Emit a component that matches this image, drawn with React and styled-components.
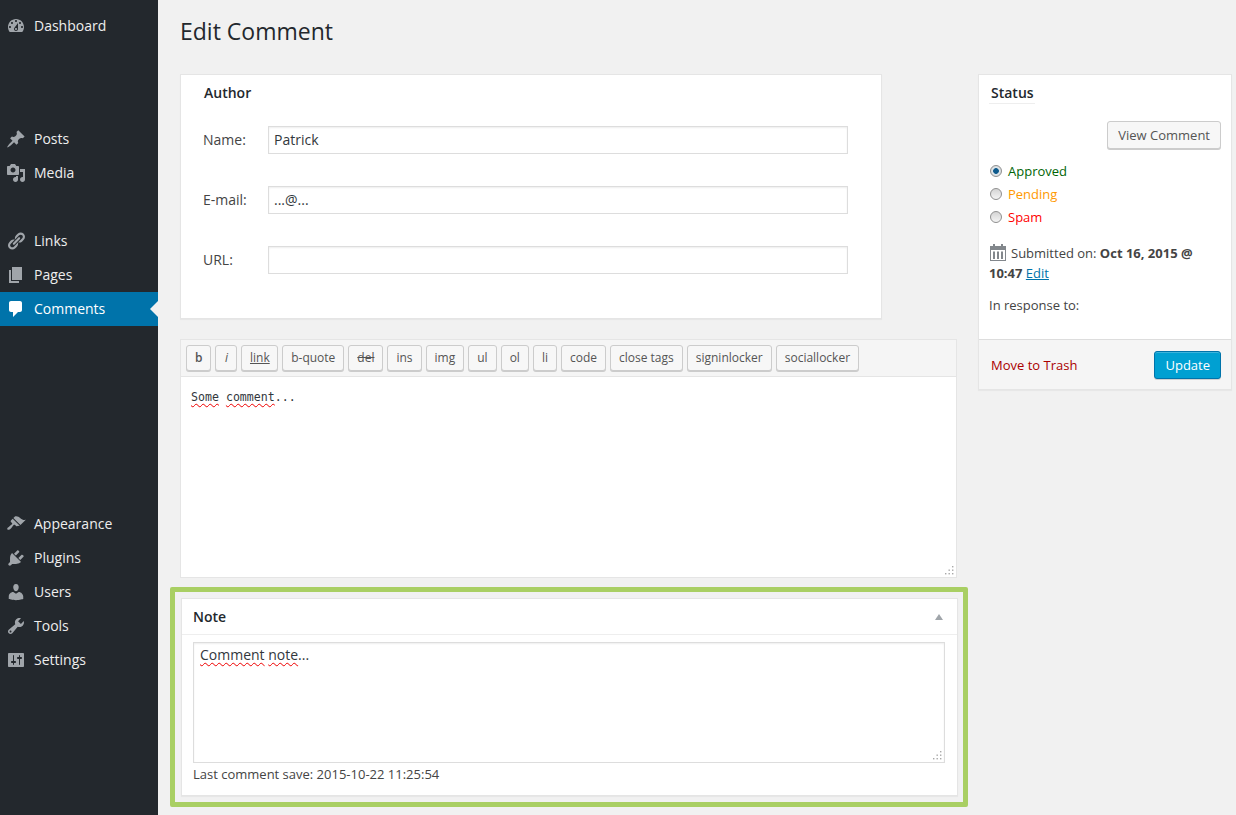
import React from 'react';
import styled, { createGlobalStyle } from 'styled-components';

const GlobalStyle = createGlobalStyle`
  html, body { margin: 0; padding: 0; background: #f1f1f1; }
  body { font-family: "Open Sans", "Liberation Sans", sans-serif; font-size: 13px; color: #444; }
  * { box-sizing: border-box; }
`;

const ICONS = {
  dashboard: 'M3.76 16h12.48c1.1-1.37 1.76-3.11 1.76-5 0-4.42-3.58-8-8-8s-8 3.58-8 8c0 1.89.66 3.63 1.76 5zM10 4c.55 0 1 .45 1 1s-.45 1-1 1-1-.45-1-1 .45-1 1-1zM6 6c.55 0 1 .45 1 1s-.45 1-1 1-1-.45-1-1 .45-1 1-1zm8 0c.55 0 1 .45 1 1s-.45 1-1 1-1-.45-1-1 .45-1 1-1zm-5.37 5.55L12 7v6c0 1.1-.9 2-2 2s-2-.9-2-2c0-.57.24-1.08.63-1.45zM4 10c.55 0 1 .45 1 1s-.45 1-1 1-1-.45-1-1 .45-1 1-1zm12 0c.55 0 1 .45 1 1s-.45 1-1 1-1-.45-1-1 .45-1 1-1zm-5 3c0-.55-.45-1-1-1s-1 .45-1 1 .45 1 1 1 1-.45 1-1z',
  posts: 'M10.44 3.02l1.82-1.82 6.36 6.35-1.83 1.82c-1.05-.68-2.48-.57-3.41.36l-.75.75c-.92.93-1.04 2.35-.35 3.41l-1.83 1.82-2.41-2.41-2.8 2.79c-.42.42-3.38 2.71-3.8 2.29s1.86-3.39 2.28-3.81l2.79-2.79L4.1 9.36l1.83-1.82c1.05.69 2.48.57 3.4-.36l.75-.75c.93-.92 1.05-2.35.36-3.41z',
  media: 'M13 11V4c0-.55-.45-1-1-1h-1.67L9 1H5L3.67 3H2c-.55 0-1 .45-1 1v7c0 .55.45 1 1 1h10c.55 0 1-.45 1-1zM7 4.5c1.38 0 2.5 1.12 2.5 2.5S8.38 9.5 7 9.5 4.5 8.38 4.5 7 5.62 4.5 7 4.5zM14 6h5v10.5c0 1.38-1.12 2.5-2.5 2.5S14 17.88 14 16.5s1.12-2.5 2.5-2.5c.17 0 .34.02.5.05V9h-3V6zm-4 8.05V13h2v3.5c0 1.38-1.12 2.5-2.5 2.5S7 17.88 7 16.5 8.12 14 9.5 14c.17 0 .34.02.5.05z',
  links: 'M17.74 2.76c1.68 1.69 1.68 4.41 0 6.1l-1.53 1.52c-1.12 1.12-2.7 1.47-4.14 1.09l2.62-2.61.76-.77.76-.76c.84-.84.84-2.2 0-3.04-.84-.85-2.2-.85-3.04 0l-.77.76-3.38 3.38c-.37-1.44-.02-3.02 1.1-4.14l1.52-1.53c1.69-1.68 4.42-1.68 6.1 0zM8.59 13.43l5.34-5.34c.42-.42.42-1.1 0-1.52-.44-.43-1.13-.39-1.53 0l-5.33 5.34c-.42.42-.42 1.1 0 1.52.44.43 1.13.39 1.52 0zm-.76 2.29l4.14-4.15c.38 1.44.03 3.02-1.09 4.14l-1.52 1.53c-1.69 1.68-4.41 1.68-6.1 0-1.68-1.68-1.68-4.42 0-6.1l1.53-1.52c1.12-1.12 2.7-1.47 4.14-1.1l-4.14 4.15c-.85.84-.85 2.2 0 3.05.84.84 2.2.84 3.04 0z',
  pages: 'M6 15V2h10v13H6zm-1 1h8v2H3V5h2v11z',
  comments: 'M5 2h9c1.1 0 2 .9 2 2v7c0 1.1-.9 2-2 2h-2l-5 5v-5H5c-1.1 0-2-.9-2-2V4c0-1.1.9-2 2-2z',
  appearance: 'M14.48 11.06L7.41 3.99l1.5-1.5c.5-.56 2.3-.47 3.51.32 1.21.8 1.43 1.28 2.91 2.1 1.18.64 2.45 1.26 4.45.85zm-.71.71L6.7 4.7 4.93 6.47c-.39.39-.39 1.02 0 1.41l1.06 1.06c.39.39.39 1.03 0 1.42-.6.6-1.43 1.11-2.21 1.69-.35.26-.7.53-1.01.84C1.43 13.23.76 14.75 1.5 15.5c.75.75 2.27.08 3.61-1.27.31-.31.58-.66.85-1.01.57-.78 1.08-1.61 1.69-2.21.39-.39 1.02-.39 1.41 0l1.06 1.06c.39.39 1.02.39 1.41 0z',
  plugins: 'M13.11 4.36L9.87 7.6 8 5.73l3.24-3.24c.35-.34 1.05-.2 1.56.32.52.51.66 1.21.31 1.55zm-8 1.77l.91-1.12 9.01 9.01-1.19.84c-.71.71-2.63 1.16-3.82 1.16H6.14L4.9 17.26c-.59.59-1.54.59-2.12 0-.59-.58-.59-1.53 0-2.12l1.24-1.24v-3.88c0-1.13.4-3.19 1.09-3.89zm7.26 3.97l3.24-3.24c.34-.35 1.04-.21 1.55.31.52.51.66 1.21.31 1.55l-3.24 3.25z',
  users: 'M10 9.25c-2.27 0-2.73-3.44-2.73-3.44C7 4.02 7.82 2 9.97 2c2.16 0 2.98 2.02 2.71 3.81 0 0-.41 3.44-2.68 3.44zm0 2.57L12.72 10c2.39 0 4.52 2.33 4.52 4.53v2.49s-3.65 1.13-7.24 1.13c-3.65 0-7.24-1.13-7.24-1.13v-2.49c0-2.25 1.94-4.48 4.47-4.48z',
  tools: 'M16.68 9.77c-1.34 1.34-3.3 1.67-4.95.99l-5.41 6.52c-.99.99-2.59.99-3.58 0s-.99-2.59 0-3.57l6.52-5.42c-.68-1.65-.35-3.61.99-4.95 1.28-1.28 3.12-1.62 4.72-1.06l-2.89 2.89 2.82 2.82 2.86-2.87c.53 1.58.18 3.39-1.08 4.65zM3.81 16.21c.4.39 1.04.39 1.43 0 .4-.4.4-1.04 0-1.43-.39-.4-1.03-.4-1.43 0-.39.39-.39 1.03 0 1.43z',
  settings: 'M18 16V4c0-.55-.45-1-1-1H3c-.55 0-1 .45-1 1v12c0 .55.45 1 1 1h14c.55 0 1-.45 1-1zM8 11h1c.55 0 1 .45 1 1s-.45 1-1 1H8v1.5c0 .28-.22.5-.5.5s-.5-.22-.5-.5V13H6c-.55 0-1-.45-1-1s.45-1 1-1h1V5.5c0-.28.22-.5.5-.5s.5.22.5.5V11zm5-2h-1c-.55 0-1-.45-1-1s.45-1 1-1h1V5.5c0-.28.22-.5.5-.5s.5.22.5.5V7h1c.55 0 1 .45 1 1s-.45 1-1 1h-1v5.5c0 .28-.22.5-.5.5s-.5-.22-.5-.5V9z',
};

const MENU = [
  { id: 'dashboard', label: 'Dashboard', gap: 9 },
  { id: 'posts', label: 'Posts', gap: 79 },
  { id: 'media', label: 'Media' },
  { id: 'links', label: 'Links', gap: 34 },
  { id: 'pages', label: 'Pages' },
  { id: 'comments', label: 'Comments', active: true },
  { id: 'appearance', label: 'Appearance', gap: 181 },
  { id: 'plugins', label: 'Plugins' },
  { id: 'users', label: 'Users' },
  { id: 'tools', label: 'Tools' },
  { id: 'settings', label: 'Settings' },
];

const QUICKTAGS = ['b', 'i', 'link', 'b-quote', 'del', 'ins', 'img', 'ul', 'ol', 'li', 'code', 'close tags', 'signinlocker', 'sociallocker'];

const Page = styled.div`
  display: flex;
  height: 815px;
  overflow: hidden;
`;

const Sidebar = styled.nav`
  width: 158px;
  flex: none;
  background: #23282d;
`;

const MenuItem = styled.a`
  position: relative;
  display: flex;
  align-items: center;
  gap: 8px;
  height: 34px;
  padding-left: 6px;
  margin-top: ${p => p.$gap || 0}px;
  font-size: 14px;
  color: ${p => (p.$active ? '#fff' : '#eee')};
  background: ${p => (p.$active ? '#0073aa' : 'transparent')};
  svg { width: 20px; height: 20px; fill: ${p => (p.$active ? '#fff' : '#a0a5aa')}; flex: none; }
`;

const MenuLabel = styled.span`
  padding-bottom: 2px;
`;

const ActiveArrow = styled.span`
  position: absolute;
  right: 0;
  top: 9px;
  border: 8px solid transparent;
  border-right-color: #f1f1f1;
  border-left-width: 0;
`;

const Main = styled.main`
  padding: 0 0 0 22px;
`;

const Title = styled.h1`
  margin: 0;
  height: 74px;
  padding-top: 15px;
  font-size: 23px;
  line-height: 32px;
  font-weight: 400;
  color: #23282d;
`;

const Columns = styled.div`
  display: flex;
  gap: 21px;
  align-items: flex-start;
`;

const LeftColumn = styled.div`
  width: 777px;
`;

const Card = styled.section`
  background: #fff;
  border: 1px solid #e5e5e5;
  box-shadow: 0 1px 1px rgba(0, 0, 0, 0.04);
`;

const AuthorCard = styled(Card)`
  width: 702px;
  height: 245px;
  padding: 8px 22px;
`;

const CardTitle = styled.h3`
  margin: 0;
  font-size: 14px;
  line-height: 20px;
  font-weight: 600;
  color: #23282d;
`;

const AuthorTitle = styled(CardTitle)`
  padding-left: 1px;
`;

const AuthorForm = styled.div`
  display: grid;
  grid-template-columns: 65px 580px;
  grid-auto-rows: 28px;
  row-gap: 32px;
  align-items: center;
  margin-top: 23px;
`;

const FieldLabel = styled.label`
  padding-bottom: 2px;
  font-size: 14px;
  color: #444;
`;

const TextInput = styled.input`
  width: 100%;
  height: 28px;
  padding: 0 5px 2px;
  border: 1px solid #ddd;
  background: #fff;
  box-shadow: inset 0 1px 2px rgba(0, 0, 0, 0.07);
  font: 14px "Open Sans", sans-serif;
  color: #32373c;
  outline: none;
`;

const Editor = styled(Card)`
  margin-top: 20px;
  height: 239px;
  position: relative;
  display: flex;
  flex-direction: column;
  box-shadow: none;
`;

const Toolbar = styled.div`
  display: flex;
  gap: 4px;
  height: 37px;
  padding: 5px;
  background: #f5f5f5;
  border-bottom: 1px solid #e5e5e5;
`;

const TagButton = styled.button`
  height: 26px;
  min-width: 22px;
  padding: 0 ${p => p.$pad || 8}px;
  border: 1px solid #ccc;
  border-radius: 3px;
  background: #f7f7f7;
  box-shadow: 0 1px 0 #ccc;
  font: ${p => (p.$italic ? 'italic ' : '')}${p => (p.$bold ? '600 ' : '')}12px/24px "Open Sans", sans-serif;
  color: #555;
  text-decoration: ${p => p.$deco || 'none'};
`;

const EditorText = styled.div`
  flex: 1;
  padding: 12px 10px;
  font: 11.6px/16px "DejaVu Sans Mono", monospace;
  color: #32373c;
`;

const Misspelled = styled.span`
  text-decoration: underline wavy #e00;
  text-decoration-thickness: 1px;
  text-underline-offset: 2px;
`;

const GripIcon = styled.svg`
  position: absolute;
  right: 2px;
  bottom: 2px;
  width: 9px;
  height: 9px;
  fill: #a8a8a8;
`;

const NoteFrame = styled.div`
  width: 798px;
  margin: 9px 0 0 -10px;
  padding: 6px 5px 6px 6px;
  border: 5px solid #a9cf63;
  border-radius: 2px;
`;

const NoteCard = styled(Card)`
  height: 198px;
`;

const NoteHead = styled.div`
  display: flex;
  align-items: center;
  justify-content: space-between;
  height: 36px;
  padding: 0 14px 0 11px;
  border-bottom: 1px solid #eee;
`;

const SortArrow = styled.span`
  border: 4px solid transparent;
  border-top-width: 0;
  border-bottom: 6px solid #a0a5aa;
`;

const NoteBody = styled.div`
  padding: 7px 12px 7px 11px;
`;

const NoteArea = styled.div`
  position: relative;
  height: 121px;
  padding: 2px 6px;
  border: 1px solid #ddd;
  box-shadow: inset 0 1px 2px rgba(0, 0, 0, 0.07);
  font-size: 14px;
  line-height: 20px;
  color: #32373c;
`;

const SavedLine = styled.p`
  margin: 1px 0 0;
  font-size: 13px;
  line-height: 20px;
  color: #444;
`;

const StatusCard = styled(Card)`
  width: 254px;
  height: 316px;
  display: flex;
  flex-direction: column;
`;

const StatusBody = styled.div`
  flex: 1;
  padding: 8px 10px 0;
`;

const StatusTitle = styled(CardTitle)`
  display: inline-block;
  padding: 0 1px 0 2px;
  height: 21px;
  border-bottom: 1px solid #eee;
`;

const ViewRow = styled.div`
  display: flex;
  justify-content: flex-end;
  margin-top: 17px;
`;

const SecondaryButton = styled.a`
  display: block;
  height: 28px;
  padding: 0 10px;
  border: 1px solid #ccc;
  border-radius: 3px;
  background: #f7f7f7;
  box-shadow: 0 1px 0 #ccc;
  font-size: 13px;
  line-height: 26px;
  color: #555;
`;

const RadioList = styled.div`
  display: grid;
  grid-auto-rows: 23px;
  margin-top: 10px;
  padding-left: 1px;
`;

const RadioRow = styled.label`
  display: flex;
  align-items: center;
  gap: 6px;
  color: ${p => p.$color};
  font-size: 13px;
`;

const RadioDot = styled.input.attrs({ type: 'radio' })`
  appearance: none;
  width: 12px;
  height: 12px;
  margin: 0;
  border: 1px solid #8f8f8f;
  border-radius: 50%;
  background: ${p => (p.$on
    ? 'radial-gradient(circle, #0e5a8c 0 2.5px, #dfe6ea 3.2px, #cfd2d4 100%)'
    : 'linear-gradient(#d4d4d4, #f4f4f4)')};
`;

const Submitted = styled.p`
  margin: 15px 0 0;
  font-size: 13px;
  line-height: 20px;
  color: #444;
  svg { width: 16px; height: 18px; vertical-align: -3px; margin: 0 5px 0 1px; }
  a { color: #0073aa; text-decoration: underline; }
`;

const ResponseLine = styled.p`
  margin: 12px 0 0;
  font-size: 13px;
  line-height: 20px;
`;

const StatusFooter = styled.div`
  display: flex;
  align-items: center;
  justify-content: space-between;
  height: 50px;
  padding: 0 10px 0 12px;
  background: #f5f5f5;
  border-top: 1px solid #ddd;
`;

const TrashLink = styled.a`
  color: #a00;
  font-size: 13px;
`;

const PrimaryButton = styled.a`
  display: block;
  height: 28px;
  padding: 0 10px;
  border: 1px solid #0073aa;
  border-radius: 3px;
  background: #00a0d2;
  box-shadow: inset 0 1px 0 rgba(120, 200, 230, 0.5), 0 1px 0 rgba(0, 0, 0, 0.15);
  font-size: 13px;
  line-height: 26px;
  color: #fff;
`;

const Grip = () => (
  <GripIcon viewBox="0 0 9 9">
    <rect x="7" y="0" width="1.4" height="1.4" />
    <rect x="3.5" y="3.5" width="1.4" height="1.4" />
    <rect x="7" y="3.5" width="1.4" height="1.4" />
    <rect x="0" y="7" width="1.4" height="1.4" />
    <rect x="3.5" y="7" width="1.4" height="1.4" />
    <rect x="7" y="7" width="1.4" height="1.4" />
  </GripIcon>
);

const CalendarIcon = () => (
  <svg viewBox="0 0 16 18">
    <path fill="#82878c" d="M0 3h3V1h2v2h6V1h2v2h3v15H0zm1 4v10h14V7z" />
    <path fill="#82878c" d="M3 8.5h2V16H3zM7 8.5h2V16H7zM11 8.5h2V16h-2z" />
  </svg>
);

function tagProps(tag) {
  if (tag === 'b') return { $bold: true, $pad: 8 };
  if (tag === 'i') return { $italic: true, $pad: 7 };
  if (tag === 'link') return { $deco: 'underline', $pad: 7.5 };
  if (tag === 'del') return { $deco: 'line-through' };
  return {};
}

export default function App() {
  return (
    <Page>
      <GlobalStyle />
      <Sidebar>
        {MENU.map(item => (
          <MenuItem key={item.id} $gap={item.gap} $active={item.active}>
            <svg viewBox="0 0 20 20"><path d={ICONS[item.id]} /></svg>
            <MenuLabel>{item.label}</MenuLabel>
            {item.active && <ActiveArrow />}
          </MenuItem>
        ))}
      </Sidebar>
      <Main>
        <Title>Edit Comment</Title>
        <Columns>
          <LeftColumn>
            <AuthorCard>
              <AuthorTitle>Author</AuthorTitle>
              <AuthorForm>
                <FieldLabel>Name:</FieldLabel>
                <TextInput defaultValue="Patrick" />
                <FieldLabel>E-mail:</FieldLabel>
                <TextInput defaultValue="...@..." />
                <FieldLabel>URL:</FieldLabel>
                <TextInput defaultValue="" />
              </AuthorForm>
            </AuthorCard>

            <Editor>
              <Toolbar>
                {QUICKTAGS.map(tag => (
                  <TagButton key={tag} {...tagProps(tag)}>{tag}</TagButton>
                ))}
              </Toolbar>
              <EditorText><Misspelled>Some</Misspelled> <Misspelled>comment</Misspelled>...</EditorText>
              <Grip />
            </Editor>

            <NoteFrame>
              <NoteCard>
                <NoteHead>
                  <CardTitle>Note</CardTitle>
                  <SortArrow />
                </NoteHead>
                <NoteBody>
                  <NoteArea>
                    <Misspelled>Comment</Misspelled> <Misspelled>note</Misspelled>...
                    <Grip />
                  </NoteArea>
                  <SavedLine>Last comment save: 2015-10-22 11:25:54</SavedLine>
                </NoteBody>
              </NoteCard>
            </NoteFrame>
          </LeftColumn>

          <StatusCard>
            <StatusBody>
              <StatusTitle>Status</StatusTitle>
              <ViewRow><SecondaryButton>View Comment</SecondaryButton></ViewRow>
              <RadioList>
                <RadioRow $color="#006505"><RadioDot name="status" $on defaultChecked />Approved</RadioRow>
                <RadioRow $color="#ff9900"><RadioDot name="status" />Pending</RadioRow>
                <RadioRow $color="#ff0000"><RadioDot name="status" />Spam</RadioRow>
              </RadioList>
              <Submitted>
                <CalendarIcon />Submitted on: <b>Oct 16, 2015 @</b> <b>10:47</b> <a>Edit</a>
              </Submitted>
              <ResponseLine>In response to:</ResponseLine>
            </StatusBody>
            <StatusFooter>
              <TrashLink>Move to Trash</TrashLink>
              <PrimaryButton>Update</PrimaryButton>
            </StatusFooter>
          </StatusCard>
        </Columns>
      </Main>
    </Page>
  );
}
